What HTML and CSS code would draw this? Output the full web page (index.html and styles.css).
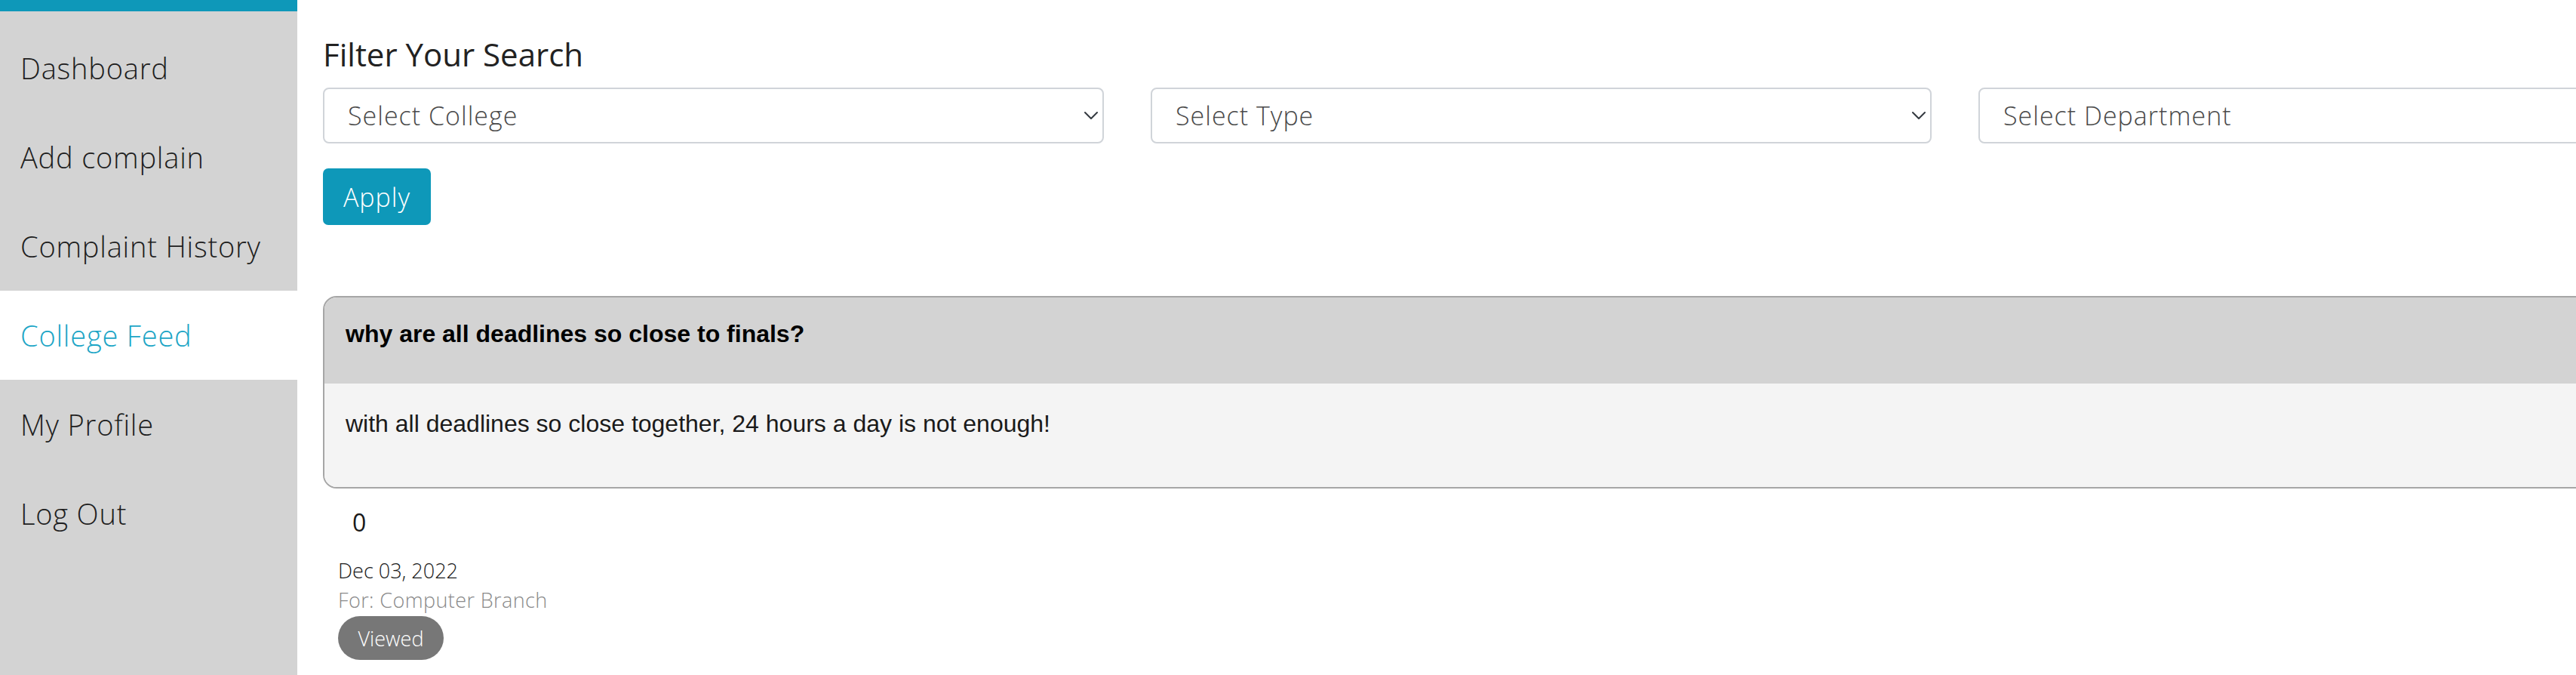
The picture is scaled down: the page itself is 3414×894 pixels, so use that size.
FILE: index.html
```html
<!DOCTYPE html>
<html lang="en">
<head>
<meta charset="utf-8">
<title>College Feed</title>
<link rel="stylesheet" href="styles.css">
</head>
<body>
<div class="layout">
  <nav class="sidebar">
    <a class="nav-item" href="#">Dashboard</a>
    <a class="nav-item" href="#">Add complain</a>
    <a class="nav-item" href="#">Complaint History</a>
    <a class="nav-item active" href="#">College Feed</a>
    <a class="nav-item" href="#">My Profile</a>
    <a class="nav-item" href="#">Log Out</a>
  </nav>
  <main class="main">
    <h2 class="title">Filter Your Search</h2>
    <div class="filters">
      <select class="select"><option>Select College</option></select>
      <select class="select"><option>Select Type</option></select>
      <select class="select"><option>Select Department</option></select>
    </div>
    <button class="btn-apply" type="button">Apply</button>
    <div class="card">
      <div class="card-header">why are all deadlines so close to finals?</div>
      <div class="card-body">with all deadlines so close together, 24 hours a day is not enough!</div>
    </div>
    <div class="count">0</div>
    <div class="meta">
      <div class="date">Dec 03, 2022</div>
      <div class="for">For: Computer Branch</div>
      <span class="badge">Viewed</span>
    </div>
  </main>
</div>
</body>
</html>
```

FILE: styles.css
```css
html, body {
  margin: 0;
  padding: 0;
  overflow: hidden;
  background: #ffffff;
}

body {
  font-family: "Open Sans", Inter, "Noto Sans", sans-serif;
  color: #212529;
}

.layout {
  display: flex;
  min-height: 894px;
}

.sidebar {
  flex: 0 0 394px;
  width: 394px;
  background: #d3d3d3;
  border-top: 15px solid #0e98b9;
  padding-top: 16px;
  display: flex;
  flex-direction: column;
  box-sizing: border-box;
}

.nav-item {
  display: flex;
  align-items: center;
  height: 118px;
  padding-left: 27px;
  font-size: 38px;
  letter-spacing: 0.8px;
  font-weight: 300;
  color: #1e1e1e;
  text-decoration: none;
}

.nav-item.active {
  background: #ffffff;
  color: #1ca5c6;
}

.main {
  flex: 0 0 auto;
  padding: 46px 0 0 34px;
  width: 3229px;
}

.title {
  margin: 0;
  font-size: 42px;
  line-height: 52px;
  font-weight: 400;
  color: #222;
}

.filters {
  margin-top: 18px;
  display: grid;
  grid-template-columns: repeat(3, 1035px);
  column-gap: 62px;
}

.select {
  -webkit-appearance: none;
  appearance: none;
  height: 74px;
  box-sizing: border-box;
  border: 2px solid #d0d4d9;
  border-radius: 8px;
  background: #fff url("data:image/svg+xml,%3csvg xmlns='http://www.w3.org/2000/svg' viewBox='0 0 18 10'%3e%3cpath fill='none' stroke='%23343a40' stroke-width='2' stroke-linecap='round' stroke-linejoin='round' d='M1 1l8 8 8-8'/%3e%3c/svg%3e") no-repeat right 6px center / 18px 10px;
  padding: 0 40px 0 31px;
  font-family: "Open Sans", Inter, sans-serif;
  font-size: 34px;
  letter-spacing: 1px;
  font-weight: 300;
  color: #4a4a4a;
}

.btn-apply {
  display: block;
  margin-top: 33px;
  width: 143px;
  height: 75px;
  border: none;
  border-radius: 7px;
  background: #0e98b9;
  color: #fff;
  font-family: "Open Sans", Inter, sans-serif;
  font-size: 34px;
  letter-spacing: 1px;
  font-weight: 300;
  padding: 0;
}

.card {
  margin-top: 94px;
  border: 2px solid #a6a6a6;
  border-radius: 18px;
  overflow: hidden;
  width: 3229px;
  font-family: "Liberation Sans", Arial, sans-serif;
  font-size: 32px;
  line-height: 48px;
}

.card-header {
  background: #d3d3d3;
  padding: 24px 28px 42px;
  font-weight: 700;
  color: #000;
}

.card-body {
  background: #f4f4f4;
  padding: 29px 28px 60px;
  color: #1a1a1a;
}

.count {
  margin-top: 25px;
  padding-left: 39px;
  font-size: 32px;
  line-height: 40px;
  color: #1a1a1a;
}

.meta {
  padding-left: 20px;
  margin-top: 24px;
  font-size: 27px;
  font-weight: 300;
  line-height: 39px;
}

.date {
  color: #1a1a1a;
}

.for {
  color: #8a8a8a;
  letter-spacing: 0.4px;
}

.badge {
  display: inline-flex;
  align-items: center;
  justify-content: center;
  margin-top: 2px;
  width: 140px;
  height: 58px;
  border-radius: 29px;
  background: #777777;
  color: #fff;
  font-size: 27px;
}
```
